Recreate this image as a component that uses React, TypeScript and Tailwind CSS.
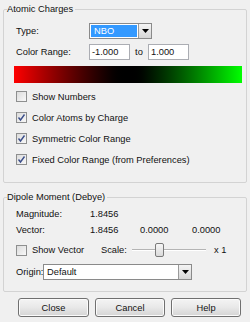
import React from "react";

function Check({ checked }: { checked?: boolean }) {
  return (
    <div className="w-[11px] h-[11px] border border-[#8e8f8f] bg-gradient-to-br from-[#dcdcdc] to-[#f8f8f8] flex items-center justify-center shrink-0">
      {checked && (
        <svg width="9" height="9" viewBox="0 0 9 9">
          <path d="M1.5 4.5 L3.5 7 L7.5 1.5" fill="none" stroke="#3b4e8a" strokeWidth="1.4" />
        </svg>
      )}
    </div>
  );
}

function Arrow() {
  return (
    <div className="w-[13px] h-full border-l border-[#9a9a9a] bg-gradient-to-b from-[#f4f4f4] to-[#d6d6d6] flex items-center justify-center shrink-0">
      <svg width="7" height="4" viewBox="0 0 7 4">
        <path d="M0 0 H7 L3.5 4 Z" fill="#000" />
      </svg>
    </div>
  );
}

function Btn({ label, w }: { label: string; w: string }) {
  return (
    <div
      className={`${w} h-[19px] border border-[#707070] rounded-[3px] bg-gradient-to-b from-[#f4f4f4] via-[#e8e8e8] to-[#d4d4d4] flex items-center justify-center shadow-[inset_0_0_0_1px_#fbfbfb]`}
    >
      {label}
    </div>
  );
}

export default function App() {
  return (
    <div className="w-[250px] h-[322px] bg-[#f0f0f0] font-['Liberation_Sans',Arial,sans-serif] text-[9.3px] leading-[12px] text-[#111] pt-[9px] px-[3px] overflow-hidden">
      {/* Atomic Charges */}
      <div className="relative h-[174px] border border-[#d3d3d3] rounded-[2px] pt-[13px] pl-[12px]">
        <span className="absolute left-[3px] top-[-7px] bg-[#f0f0f0] pr-[2px]">Atomic Charges</span>
        <div className="flex items-center h-[16px]">
          <span className="w-[73px]">Type:</span>
          <div className="w-[63px] h-[16px] border border-[#8a8a8a] bg-white flex">
            <div className="flex-1 m-[1px] bg-[#3399ff] text-white pl-[3px] flex items-center">NBO</div>
            <Arrow />
          </div>
        </div>
        <div className="flex items-center h-[16px] mt-[5px]">
          <span className="w-[73px]">Color Range:</span>
          <div className="w-[41px] h-[16px] border border-[#abadb3] bg-white pl-[2px] flex items-center">-1.000</div>
          <span className="w-[18px] text-center">to</span>
          <div className="w-[41px] h-[16px] border border-[#abadb3] bg-white pl-[2px] flex items-center">1.000</div>
        </div>
        <div className="mt-[6px] ml-[-2px] w-[228px] h-[17px] bg-gradient-to-r from-[#ff0000] via-[#000000] to-[#00ff00]" />
        <div className="mt-[3px]">
          <div className="flex items-center h-[21px]">
            <Check />
            <span className="ml-[5px]">Show Numbers</span>
          </div>
          <div className="flex items-center h-[21px]">
            <Check checked />
            <span className="ml-[5px]">Color Atoms by Charge</span>
          </div>
          <div className="flex items-center h-[21px]">
            <Check checked />
            <span className="ml-[5px]">Symmetric Color Range</span>
          </div>
          <div className="flex items-center h-[21px]">
            <Check checked />
            <span className="ml-[5px]">Fixed Color Range (from Preferences)</span>
          </div>
        </div>
      </div>

      {/* Dipole Moment */}
      <div className="relative mt-[14px] h-[95px] border border-[#d3d3d3] rounded-[2px] pt-[8px] pl-[12px]">
        <span className="absolute left-[3px] top-[-7px] bg-[#f0f0f0] pr-[2px]">Dipole Moment (Debye)</span>
        <div className="flex items-center h-[16px]">
          <span className="w-[74px]">Magnitude:</span>
          <span>1.8456</span>
        </div>
        <div className="flex items-center h-[16px]">
          <span className="w-[74px]">Vector:</span>
          <span className="w-[50px]">1.8456</span>
          <span className="w-[52px]">0.0000</span>
          <span>0.0000</span>
        </div>
        <div className="flex items-center h-[16px] mt-[4px]">
          <Check />
          <span className="ml-[5px] w-[69px]">Show Vector</span>
          <span className="w-[31px]">Scale:</span>
          <div className="relative w-[74px] h-[16px] flex items-center">
            <div className="w-full h-[2px] border-t border-[#b4b4b4] border-b border-b-white" />
            <div className="absolute left-[23px] top-[1px] w-[9px] h-[14px] border border-[#7a7a7a] rounded-[2px] bg-gradient-to-b from-[#f6f6f6] to-[#dadada]" />
          </div>
          <span className="ml-[8px]">x 1</span>
        </div>
        <div className="flex items-center h-[16px] mt-[6px]">
          <span className="w-[27px]">Origin:</span>
          <div className="w-[149px] h-[16px] border border-[#8a8a8a] bg-white flex">
            <div className="flex-1 pl-[3px] flex items-center">Default</div>
            <Arrow />
          </div>
        </div>
      </div>

      <div className="flex gap-[6px] mt-[6px] ml-[15px]">
        <Btn label="Close" w="w-[71px]" />
        <Btn label="Cancel" w="w-[70px]" />
        <Btn label="Help" w="w-[70px]" />
      </div>
    </div>
  );
}
